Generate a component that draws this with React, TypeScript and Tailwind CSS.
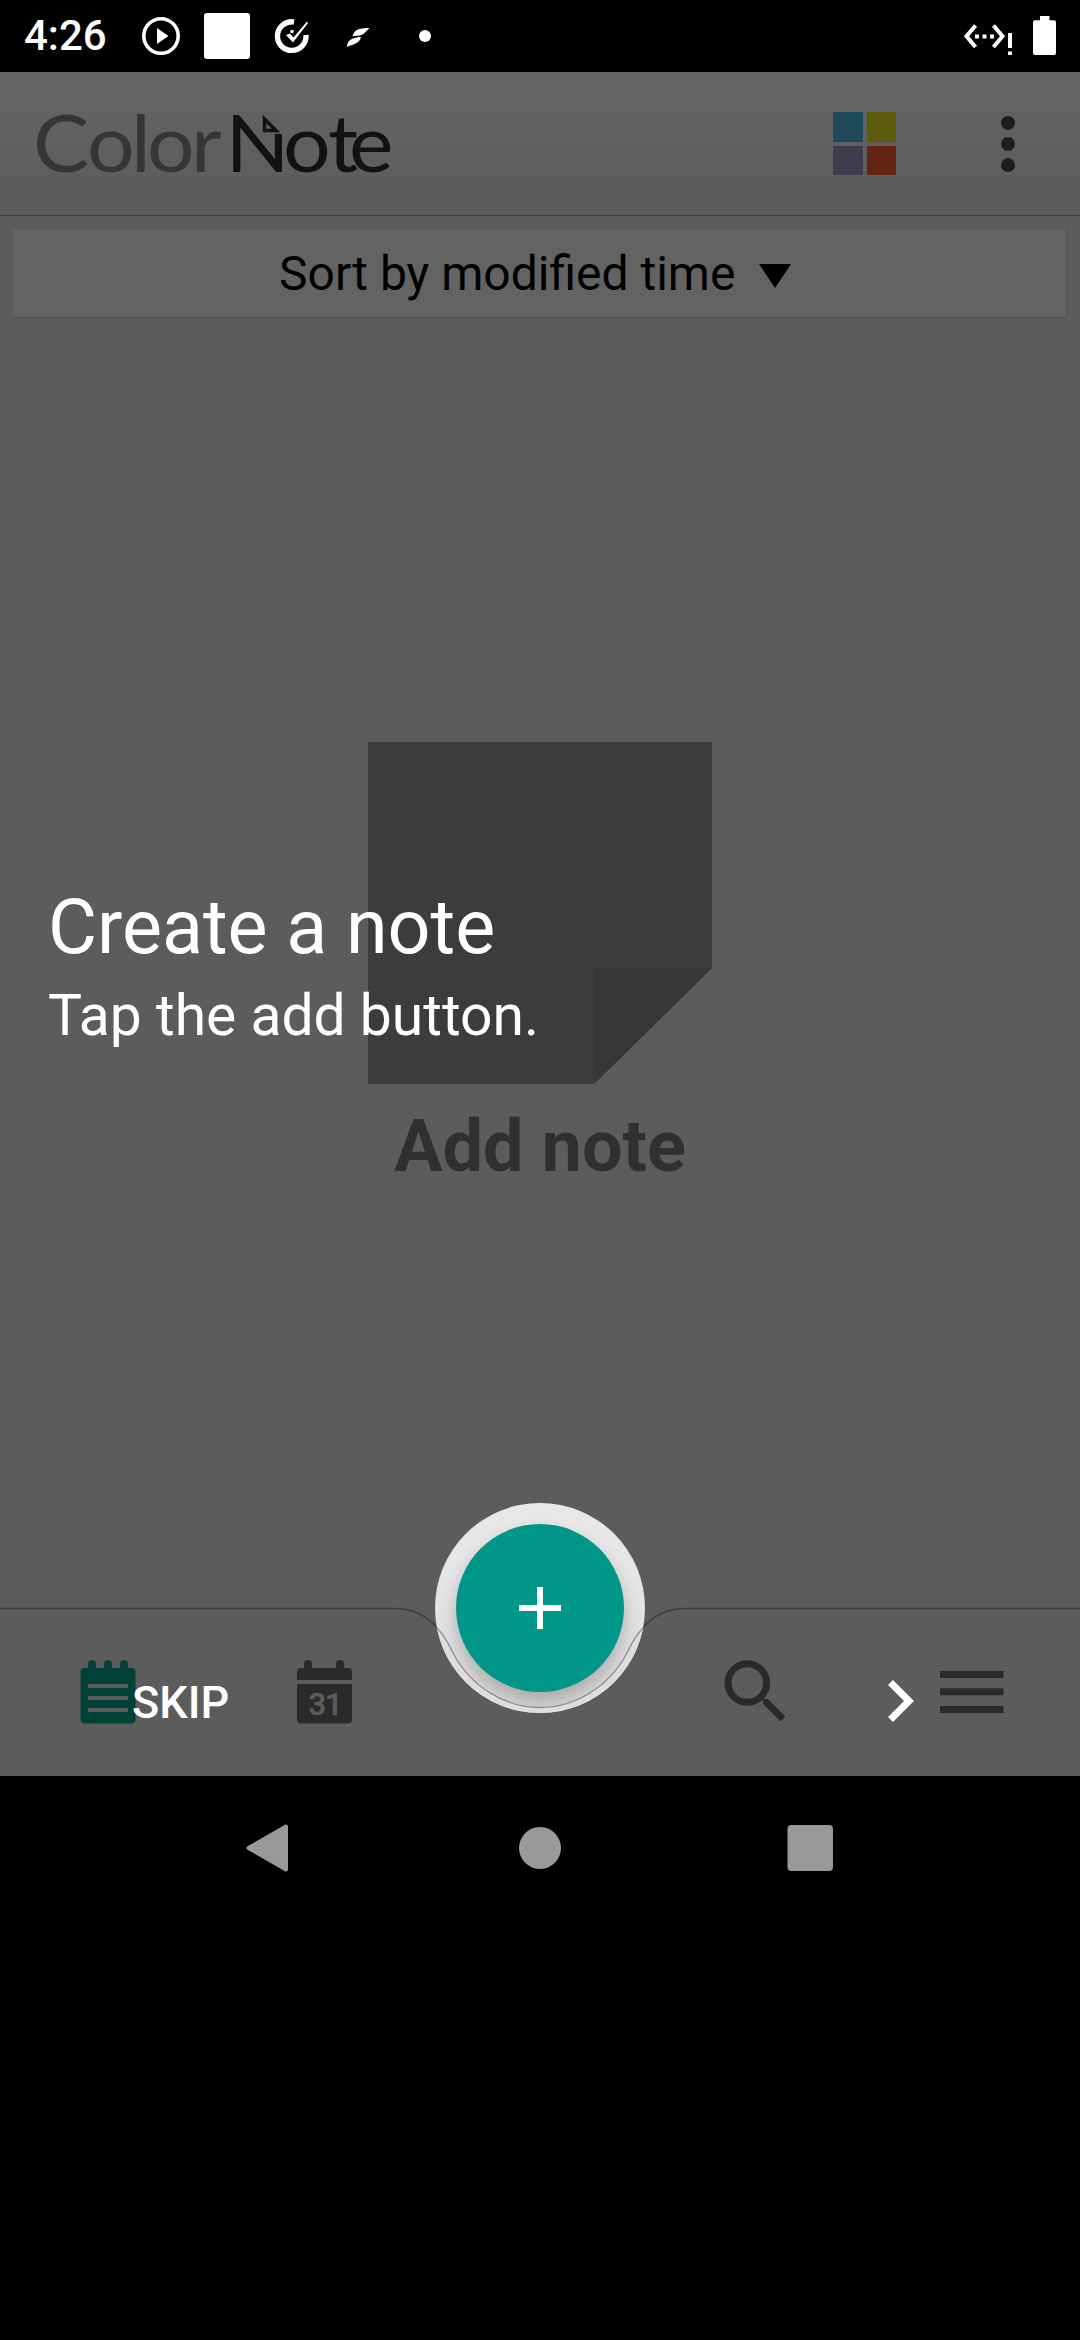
import React from "react";

const RING = "M0 .5H394C414 .5 428 9 437 20C445 28 448 35 452 43C469 77 503 99.5 540 99.5C577 99.5 611 77 628 43C632 35 635 28 643 20C652 9 666 .5 686 .5H1080";

function StatusBar() {
  return (
    <div className="flex h-[72px] items-center bg-black text-white">
      <span className="ml-[24px] w-[84px] text-[42px] leading-[72px] font-medium whitespace-nowrap">4:26</span>
      <svg className="ml-[27px] h-[72px] w-[310px]" viewBox="135 0 310 72" fill="#fff">
        <circle cx="161" cy="36" r="17.2" fill="none" stroke="#fff" strokeWidth="3.6" />
        <path d="M157 28V44L168.500 36Z" />
        <rect x="204" y="13" width="46" height="46" rx="3" />
        <path d="M294 22A14.300 14.300 0 1 0 306 35" fill="none" stroke="#fff" strokeWidth="5.400" />
        <path d="M286 35L290 33.500L293.500 37.500L307 21.500L308 23L293 42.500Z" />
        <circle cx="292" cy="31.500" r="1.800" />
        <path d="M352.500 36.500C354 30 358 28 369.500 28L364 33.500C360 37 356 35 352.500 36.500ZM361 37C359.500 44 354 43.500 347 47C347 41 351 37.500 361 37Z" />
        <circle cx="425" cy="36" r="6" />
      </svg>
      <svg className="ml-auto h-[72px] w-[124px]" viewBox="956 0 124 72" fill="#fff">
        <path d="M975.500 25.500L966.500 36.300L975.500 47M993.500 25.500L1002.500 36.300L993.500 47" fill="none" stroke="#fff" strokeWidth="4" />
        <path d="M975 34.500h4v4h-4zM982.500 34.500h4v4h-4zM990 34.500h4v4h-4zM1008 33h4v15h-4zM1008 51.500h4v3.500h-4z" />
        <path d="M1040 16h9.500v4.300h4.500a2 2 0 0 1 2 2V53a2 2 0 0 1-2 2h-19a2 2 0 0 1-2-2V22.300a2 2 0 0 1 2-2h5Z" />
      </svg>
    </div>
  );
}

function Logo() {
  return (
    <svg className="h-[143px] w-[400px]" viewBox="0 72 400 143" fontFamily="Lato" fontSize="80">
      <g transform="translate(0 172) scale(1.05 1)">
        <text x="31.500 82.900 124.800 140 181.900" y="0" fill="#363636">Color</text>
        <text x="214.800 269.500 312.500 332.500" y="0" fill="#121212">Note</text>
      </g>
      <path d="M262 112H286V134H262Z" fill="#606060" />
      <path d="M264.500 119V130.500H276Z" fill="none" stroke="#121212" strokeWidth="3.500" />
    </svg>
  );
}

function Header() {
  return (
    <header className="flex h-[144px] items-center border-b border-[#414141] bg-linear-to-b from-[#656565] to-[#5b5b5b]">
      <Logo />
      <div className="ml-auto grid grid-cols-2 gap-[4px]">
        <div className="size-[29.500px] bg-[#1d4b5a]" />
        <div className="size-[29.500px] bg-[#5c5c0c]" />
        <div className="size-[29.500px] bg-[#403b4d]" />
        <div className="size-[29.500px] bg-[#632413]" />
      </div>
      <div className="mr-[65px] ml-[105px] flex flex-col gap-[7px]">
        <i className="size-[14px] rounded-full bg-[#1e1e1e]" />
        <i className="size-[14px] rounded-full bg-[#1e1e1e]" />
        <i className="size-[14px] rounded-full bg-[#1e1e1e]" />
      </div>
    </header>
  );
}

function BottomBar() {
  return (
    <footer className="relative h-[168px]">
      <svg className="absolute -top-[112px] left-0 h-[280px] w-[1080px]" viewBox="0 -112 1080 280">
        <defs>
          <clipPath id="spot"><circle cx="540" cy="0" r="105" /></clipPath>
          <linearGradient id="disc" x1="0" y1="0" x2="0" y2="1">
            <stop offset="0" stopColor="#e8e8e8" />
            <stop offset=".5" stopColor="#e4e4e4" />
            <stop offset="1" stopColor="#d8d8d8" />
          </linearGradient>
          <filter id="blur" x="-30%" y="-30%" width="160%" height="160%"><feGaussianBlur stdDeviation="10" /></filter>
        </defs>
        <path d={RING} fill="none" stroke="#3d3d3d" strokeWidth="1.300" />
        <circle cx="540" cy="0" r="105" fill="url(#disc)" />
        <g clipPath="url(#spot)">
          <circle cx="540" cy="10" r="83" fill="#000" opacity=".24" filter="url(#blur)" />
          <path d={RING + "V168H0Z"} fill="#dedede" />
          <path d={RING} fill="none" stroke="#8c8c8c" strokeWidth="1.300" />
        </g>
        <circle cx="540" cy="0" r="84" fill="#009688" />
        <path d="M519 0H561M540 -21V21" stroke="#fff" strokeWidth="6" />
        <g fill="#004239">
          <rect x="80.500" y="60" width="55" height="55.500" rx="4" />
          <rect x="88" y="52" width="8" height="16" rx="4" />
          <rect x="104" y="52" width="8" height="16" rx="4" />
          <rect x="120" y="52" width="8" height="16" rx="4" />
        </g>
        <path d="M88 78H128M88 90H128M88 102H128" stroke="#5c5c5c" strokeWidth="4" />
        <g fill="#2a2a2a">
          <path d="M297 72V64a4 4 0 0 1 4-4H348a4 4 0 0 1 4 4V72ZM297 76H352V111.500a4 4 0 0 1-4 4H301a4 4 0 0 1-4-4Z" />
          <rect x="304" y="52" width="8" height="14" rx="4" />
          <rect x="336" y="52" width="8" height="14" rx="4" />
          <path d="M763 91H768L785.500 108.500L780.500 113.500L763 96Z" />
          <path d="M940 63H1003.500V70H940ZM940 80.300H1003.500V87.300H940ZM940 98H1003.500V105H940Z" />
        </g>
        <circle cx="747.300" cy="75" r="19.300" fill="none" stroke="#2a2a2a" strokeWidth="7" />
        <text x="325.500" y="106.500" textAnchor="middle" fontSize="31" fontWeight="500" fill="#5c5c5c" stroke="#5c5c5c" strokeWidth=".5" textLength="34">31</text>
        <path d="M890.500 74.500L909 93L890.500 111.500" fill="none" stroke="#fff" strokeWidth="7" />
      </svg>
      <span className="absolute top-[68px] left-[132px] text-[45px] leading-[53px] font-medium text-white">SKIP</span>
    </footer>
  );
}

export default function App() {
  return (
    <div className="flex h-[2340px] w-[1080px] flex-col overflow-hidden bg-black font-[Roboto,sans-serif]">
      <StatusBar />
      <div className="flex h-[1704px] flex-col bg-[#5c5c5c]">
        <Header />
        <div className="mx-[13px] mt-[13px] flex h-[89px] items-center border-r border-b border-[#505050] bg-[#636363] pl-[266px]">
          <span className="pt-[2px] text-[48px] leading-[86px] whitespace-nowrap text-black">Sort by modified time</span>
          <svg className="mt-[6px] ml-[24px] h-[24px] w-[32px]" viewBox="0 0 32 24"><path d="M0 0H32L16 24Z" /></svg>
        </div>
        <main className="relative flex flex-1 flex-col items-center pt-[424px]">
          <svg className="h-[342px] w-[344px]" viewBox="0 0 344 342">
            <path d="M0 0H344V226L226 342H0Z" fill="#3c3c3c" />
            <path d="M226 226H344L226 342Z" fill="#373737" />
          </svg>
          <p className="mt-[21px] text-[72px] leading-[84px] font-bold text-[#303030]">Add note</p>
          <div className="absolute top-[560px] left-[48px] text-white">
            <h1 className="text-[75.400px] leading-[98px] whitespace-nowrap">Create a note</h1>
            <p className="mt-px text-[57px] leading-[78px] whitespace-nowrap">Tap the add button.</p>
          </div>
        </main>
        <BottomBar />
      </div>
      <nav className="h-[144px]">
        <svg className="h-[144px] w-[1080px]" viewBox="0 1776 1080 144" fill="#999">
          <path d="M286 1826.500V1869.500L248.500 1848Z" stroke="#999" strokeWidth="4" strokeLinejoin="round" />
          <circle cx="540" cy="1848" r="21" />
          <rect x="787.500" y="1825" width="45.500" height="46" rx="4" />
        </svg>
      </nav>
    </div>
  );
}
